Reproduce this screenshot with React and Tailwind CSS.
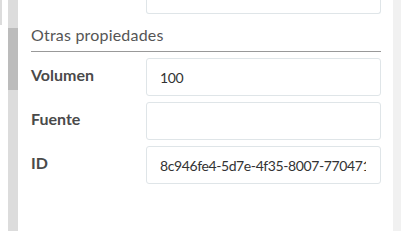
import React from 'react'

const rows = [
  { label: 'Volumen', value: '100' },
  { label: 'Fuente', value: '' },
  { label: 'ID', value: '8c946fe4-5d7e-4f35-8007-770471f3a2b1' },
]

function Field({ label, value }) {
  return (
    <div className="flex items-start h-[38px] mb-[6px]">
      <label className="w-[115px] shrink-0 pt-[5px] text-[16px] font-bold text-[#4a4a4a]">{label}</label>
      <input
        readOnly
        value={value}
        className="w-[235px] h-[38px] rounded-[3px] border border-[#dfe5e8] bg-white pl-[13px] pr-[14px] text-[14px] tracking-[-0.4px] text-[#333] outline-none"
      />
    </div>
  )
}

export default function App() {
  return (
    <div className="w-[401px] h-[231px] flex bg-white overflow-hidden font-['Lato',sans-serif]">
      {/* left edge */}
      <div className="w-[2px] shrink-0 flex flex-col">
        <div className="h-[25px] bg-[#dcdcdc]" />
      </div>
      <div className="w-[6px] shrink-0" />
      {/* scrollbar */}
      <div className="w-[10px] shrink-0 bg-[#dcdcdc] flex flex-col">
        <div className="h-[28px]" />
        <div className="h-[62px] bg-[#bcbcbc]" />
      </div>
      <div className="w-[13px] shrink-0" />

      {/* content */}
      <div className="w-[350px] shrink-0 flex flex-col">
        <div className="ml-[115px] h-[14px] w-[235px] rounded-b-[3px] border border-t-0 border-[#dfe5e8]" />
        <div className="h-[37px] flex items-center pt-[4px] text-[16px] tracking-[0.2px] text-[#555]">Otras propiedades</div>
        <div className="h-[1px] bg-[#999]" />
        <div className="h-[6px]" />
        {rows.map((r) => (
          <Field key={r.label} label={r.label} value={r.value} />
        ))}
      </div>

      <div className="w-[12px] shrink-0" />
      <div className="w-[8px] shrink-0 bg-[#f1f1f1]" />
    </div>
  )
}
